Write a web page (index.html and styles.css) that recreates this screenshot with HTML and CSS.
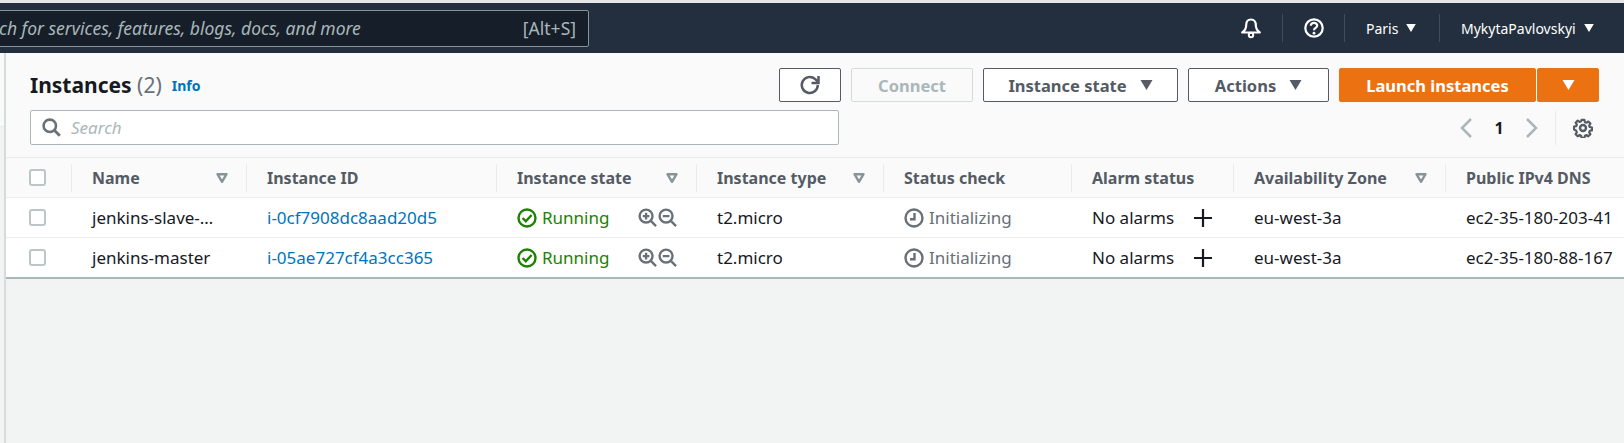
FILE: index.html
```html
<!DOCTYPE html>
<html lang="en">
<head>
    <meta charset="UTF-8">
    <title>Instances | EC2</title>
    <link rel="stylesheet" href="styles.css">
</head>
<body>
    <svg class="icon-defs" width="0" height="0">
        <defs>
            <symbol id="filter" viewBox="0 0 12 10">
                <path d="M1.500 1.200h9L6 8.800z" fill="none" stroke="currentColor" stroke-width="2.400" stroke-linejoin="round"/>
            </symbol>
            <symbol id="running" viewBox="0 0 20 20">
                <circle cx="10" cy="10" r="8.500" fill="none" stroke="currentColor" stroke-width="2.400"/>
                <path d="M5.600 10l3.200 3.200 5.800-6.200" fill="none" stroke="currentColor" stroke-width="2.400"/>
            </symbol>
            <symbol id="zoom-in" viewBox="0 0 20 20">
                <circle cx="8.500" cy="8.500" r="6.800" fill="none" stroke="currentColor" stroke-width="2.500"/>
                <path d="M13.500 13.500l5.500 5.500M5 8.500h7M8.500 5v7" fill="none" stroke="currentColor" stroke-width="2.500"/>
            </symbol>
            <symbol id="zoom-out" viewBox="0 0 20 20">
                <circle cx="8.500" cy="8.500" r="6.800" fill="none" stroke="currentColor" stroke-width="2.500"/>
                <path d="M13.500 13.500l5.500 5.500M5 8.500h7" fill="none" stroke="currentColor" stroke-width="2.500"/>
            </symbol>
            <symbol id="clock" viewBox="0 0 20 20">
                <circle cx="10" cy="10" r="8.500" fill="none" stroke="currentColor" stroke-width="2.400"/>
                <path d="M10.500 5v6.200H6" fill="none" stroke="currentColor" stroke-width="2.400"/>
            </symbol>
            <symbol id="plus" viewBox="0 0 18 18">
                <path d="M0 9h18M9 0v18" fill="none" stroke="currentColor" stroke-width="2.200"/>
            </symbol>
            <symbol id="caret" viewBox="0 0 12 10">
                <path d="M0 0h12L6 10z" fill="currentColor"/>
            </symbol>
        </defs>
    </svg>

    <div class="top-strip"></div>

    <header class="nav">
        <div class="nav-search">
            <span class="nav-search-text">ch for services, features, blogs, docs, and more</span>
            <span class="nav-search-key">[Alt+S]</span>
        </div>
        <div class="nav-right">
            <span class="nav-item nav-bell">
                <svg width="22" height="22" viewBox="0 0 22 22"><path d="M11 2.500c-3.200 0-4.800 2.500-4.800 5.500 0 3.500-1.200 5.500-4 7.500h17.600c-2.800-2-4-4-4-7.500 0-3-1.600-5.500-4.800-5.500z" fill="none" stroke="#fff" stroke-width="2.200" stroke-linejoin="round"/><circle cx="11" cy="18" r="2.200" fill="none" stroke="#fff" stroke-width="2"/></svg>
            </span>
            <span class="nav-item nav-help">
                <svg width="20" height="20" viewBox="0 0 20 20"><circle cx="10" cy="10" r="8.700" fill="none" stroke="#fff" stroke-width="2.200"/><path d="M6.800 7.800c0-1.900 1.400-3 3.200-3s3.200 1.100 3.200 2.700c0 2.500-3.200 2.300-3.200 4.700" fill="none" stroke="#fff" stroke-width="2.200"/><circle cx="10" cy="15.200" r="1.400" fill="#fff"/></svg>
            </span>
            <span class="nav-item nav-region">Paris <svg class="nav-caret"><use href="#caret"/></svg></span>
            <span class="nav-item nav-user">MykytaPavlovskyi <svg class="nav-caret"><use href="#caret"/></svg></span>
        </div>
    </header>

    <div class="page">
        <div class="rail">
            <div class="rail-top"></div>
        </div>
        <main class="content">
            <section class="panel-head">
                <div class="head-row">
                    <h1 class="title">Instances <span class="count">(2)</span></h1>
                    <a class="info">Info</a>
                    <div class="actions">
                        <button class="btn btn-refresh" type="button">
                            <svg width="24" height="24" viewBox="0 0 24 24"><path d="M19.800 12a8 8 0 1 1-2.600-5.900l2.600 2.400" fill="none" stroke="#545b64" stroke-width="2.500"/><path d="M20.500 3v7h-7" fill="none" stroke="#545b64" stroke-width="2.500"/></svg>
                        </button>
                        <button class="btn btn-connect" type="button" disabled>Connect</button>
                        <button class="btn btn-state" type="button">Instance state <svg class="btn-caret"><use href="#caret"/></svg></button>
                        <button class="btn btn-actions" type="button">Actions <svg class="btn-caret"><use href="#caret"/></svg></button>
                        <div class="launch">
                            <button class="btn btn-launch" type="button">Launch instances</button>
                            <button class="btn btn-launch-more" type="button"><svg class="btn-caret"><use href="#caret"/></svg></button>
                        </div>
                    </div>
                </div>
                <div class="tools-row">
                    <div class="search">
                        <svg width="19" height="19" viewBox="0 0 19 19"><circle cx="7.800" cy="7.800" r="6.200" fill="none" stroke="#687078" stroke-width="2.600"/><path d="M12.300 12.300l5.500 5.500" fill="none" stroke="#687078" stroke-width="2.800"/></svg>
                        <span class="search-text">Search</span>
                    </div>
                    <div class="pager">
                        <svg width="12" height="20" viewBox="0 0 12 20"><path d="M11 1L2 10l9 9" fill="none" stroke="#aab7b8" stroke-width="2.500"/></svg>
                        <span class="pager-num">1</span>
                        <svg width="12" height="20" viewBox="0 0 12 20"><path d="M1 1l9 9-9 9" fill="none" stroke="#aab7b8" stroke-width="2.500"/></svg>
                        <span class="pager-gear">
                            <svg width="20" height="20" viewBox="0 0 20 20"><path d="M8.400 1h3.200l.5 2.500 1.700.7 2.100-1.400 2.300 2.300-1.400 2.100.7 1.700 2.500.5v3.200l-2.500.5-.7 1.700 1.400 2.100-2.300 2.300-2.100-1.400-1.700.7-.5 2.500H8.400l-.5-2.500-1.700-.7-2.100 1.400-2.300-2.300 1.400-2.100-.7-1.700L0 11.600V8.400l2.500-.5.700-1.700-1.400-2.100 2.300-2.300 2.100 1.400 1.700-.7z" transform="translate(1 1) scale(.9)" fill="none" stroke="#545b64" stroke-width="2.400" stroke-linejoin="round"/><circle cx="10" cy="10" r="3" fill="none" stroke="#545b64" stroke-width="2.400"/></svg>
                        </span>
                    </div>
                </div>
            </section>

            <section class="table">
                <div class="row row-head">
                    <div class="cell cell-check"><span class="checkbox"></span></div>
                    <div class="cell"><div class="col-head">Name <svg class="filter"><use href="#filter"/></svg></div></div>
                    <div class="cell"><div class="col-head">Instance ID</div></div>
                    <div class="cell"><div class="col-head">Instance state <svg class="filter"><use href="#filter"/></svg></div></div>
                    <div class="cell"><div class="col-head">Instance type <svg class="filter"><use href="#filter"/></svg></div></div>
                    <div class="cell"><div class="col-head">Status check</div></div>
                    <div class="cell"><div class="col-head">Alarm status</div></div>
                    <div class="cell"><div class="col-head">Availability Zone <svg class="filter"><use href="#filter"/></svg></div></div>
                    <div class="cell"><div class="col-head">Public IPv4 DNS</div></div>
                </div>

                <div class="row row-body">
                    <div class="cell cell-check"><span class="checkbox"></span></div>
                    <div class="cell cell-text">jenkins-slave-…</div>
                    <div class="cell cell-text"><a class="link">i-0cf7908dc8aad20d5</a></div>
                    <div class="cell cell-text cell-state">
                        <span class="running"><svg class="status-icon"><use href="#running"/></svg>Running</span>
                        <span class="zooms"><svg class="zoom-icon"><use href="#zoom-in"/></svg><svg class="zoom-icon"><use href="#zoom-out"/></svg></span>
                    </div>
                    <div class="cell cell-text">t2.micro</div>
                    <div class="cell cell-text muted"><svg class="status-icon"><use href="#clock"/></svg>Initializing</div>
                    <div class="cell cell-text cell-alarm">No alarms <svg class="plus"><use href="#plus"/></svg></div>
                    <div class="cell cell-text">eu-west-3a</div>
                    <div class="cell cell-text cell-dns">ec2-35-180-203-41</div>
                </div>

                <div class="row row-body row-last">
                    <div class="cell cell-check"><span class="checkbox"></span></div>
                    <div class="cell cell-text">jenkins-master</div>
                    <div class="cell cell-text"><a class="link">i-05ae727cf4a3cc365</a></div>
                    <div class="cell cell-text cell-state">
                        <span class="running"><svg class="status-icon"><use href="#running"/></svg>Running</span>
                        <span class="zooms"><svg class="zoom-icon"><use href="#zoom-in"/></svg><svg class="zoom-icon"><use href="#zoom-out"/></svg></span>
                    </div>
                    <div class="cell cell-text">t2.micro</div>
                    <div class="cell cell-text muted"><svg class="status-icon"><use href="#clock"/></svg>Initializing</div>
                    <div class="cell cell-text cell-alarm">No alarms <svg class="plus"><use href="#plus"/></svg></div>
                    <div class="cell cell-text">eu-west-3a</div>
                    <div class="cell cell-text cell-dns">ec2-35-180-88-167</div>
                </div>
            </section>
        </main>
    </div>
</body>
</html>
```
FILE: styles.css
```css
html, body {
    margin: 0;
    height: 100%;
    overflow: hidden;
}
body {
    display: flex;
    flex-direction: column;
    font-family: "Noto Sans", Arial, sans-serif;
    font-size: 17px;
    color: #16191f;
    background-color: #f2f3f3;
}
.icon-defs {
    position: absolute;
}
.top-strip {
    height: 3px;
    background-color: #e4e6e8;
}

/* top navigation */
.nav {
    display: flex;
    align-items: center;
    height: 50px;
    background-color: #232f3e;
    color: #fff;
}
.nav-search {
    display: flex;
    align-items: center;
    justify-content: space-between;
    box-sizing: border-box;
    width: 591px;
    height: 37px;
    margin-left: -2px;
    padding: 0 12px 0 0;
    background-color: #161e2a;
    border: 1px solid #879596;
    border-radius: 2px;
    color: #aab7b8;
    font-size: 17.500px;
}
.nav-search-text {
    font-style: italic;
}
.nav-right {
    display: flex;
    align-items: center;
    margin-left: auto;
    font-size: 14px;
}
.nav-item {
    display: flex;
    align-items: center;
    box-sizing: border-box;
    height: 28px;
}
.nav-item + .nav-item {
    border-left: 1px solid #414d5c;
}
.nav-bell {
    width: 50px;
    padding-left: 8px;
}
.nav-help {
    width: 62px;
    padding-left: 21px;
}
.nav-region {
    width: 95px;
    padding-left: 21px;
}
.nav-user {
    width: 185px;
    padding-left: 21px;
}
.nav-caret {
    width: 10px;
    height: 8px;
    margin-left: 8px;
    color: #fff;
}

/* page body */
.page {
    flex: 1;
    display: flex;
}
.rail {
    width: 4px;
}
.rail-top {
    box-sizing: border-box;
    height: 74px;
    background-color: #fafafa;
    border-bottom: 1px solid #eaeded;
}
.content {
    flex: 1;
    min-width: 0;
    border-left: 2px solid #d5dbdb;
}
.panel-head {
    box-sizing: border-box;
    height: 105px;
    padding: 15px 25px 0 24px;
    background-color: #fafafa;
    border-bottom: 1px solid #eaeded;
}
.head-row {
    display: flex;
    align-items: center;
    height: 34px;
}
.title {
    margin: 0;
    font-size: 21px;
    font-weight: 700;
}
.count {
    font-weight: 400;
    color: #687078;
}
.info {
    margin-left: 10px;
    font-size: 14px;
    font-weight: 700;
    color: #0073bb;
}
.actions {
    display: flex;
    gap: 10px;
    margin-left: auto;
}
.btn {
    display: flex;
    align-items: center;
    justify-content: center;
    box-sizing: border-box;
    height: 34px;
    padding: 0;
    font-family: inherit;
    font-size: 16.500px;
    font-weight: 700;
    color: #545b64;
    background-color: #fff;
    border: 1px solid #545b64;
    border-radius: 2px;
}
.btn-refresh {
    width: 62px;
}
.btn-connect {
    width: 122px;
    color: #aab7b8;
    background-color: #fafafa;
    border-color: #d5dbdb;
}
.btn-state {
    width: 195px;
}
.btn-actions {
    width: 141px;
}
.btn-caret {
    width: 13px;
    height: 10px;
    margin-left: 13px;
}
.launch {
    display: flex;
    gap: 1px;
}
.btn-launch,
.btn-launch-more {
    color: #fff;
    background-color: #ec7211;
    border-color: #ec7211;
}
.btn-launch {
    width: 197px;
}
.btn-launch-more {
    width: 62px;
}
.btn-launch-more .btn-caret {
    margin-left: 0;
}
.tools-row {
    display: flex;
    align-items: center;
    margin-top: 8px;
}
.search {
    display: flex;
    align-items: center;
    box-sizing: border-box;
    width: 809px;
    height: 35px;
    padding-left: 11px;
    background-color: #fff;
    border: 1px solid #aab7b8;
    border-radius: 2px;
}
.search-text {
    margin-left: 10px;
    font-size: 17px;
    font-style: italic;
    color: #aab7b8;
}
.pager {
    display: flex;
    align-items: center;
    margin-left: auto;
}
.pager-num {
    width: 54px;
    font-size: 16px;
    font-weight: 700;
    text-align: center;
}
.pager-gear {
    display: flex;
    align-items: center;
    box-sizing: border-box;
    width: 44px;
    height: 34px;
    margin-left: 17px;
    padding-left: 17px;
    border-left: 1px solid #eaeded;
}

/* instances table */
.table {
    border-bottom: 2px solid #aab7b8;
}
.row {
    display: grid;
    grid-template-columns: 65px 175px 250px 200px 187px 188px 162px 212px 179px;
}
.row-head {
    height: 39px;
    background-color: #fafafa;
    border-bottom: 1px solid #eaeded;
    font-size: 16px;
    font-weight: 700;
    color: #545b64;
}
.row-body {
    height: 39px;
    background-color: #fff;
    border-bottom: 1px solid #eaeded;
}
.row-last {
    border-bottom: none;
}
.cell {
    display: flex;
    align-items: center;
    min-width: 0;
}
.cell-check {
    padding-left: 23px;
}
.cell-text {
    padding-left: 21px;
    white-space: nowrap;
}
.checkbox {
    box-sizing: border-box;
    width: 17px;
    height: 17px;
    background-color: #fff;
    border: 2px solid #bcc6c6;
    border-radius: 3px;
}
.col-head {
    display: flex;
    align-items: center;
    justify-content: space-between;
    box-sizing: border-box;
    width: 100%;
    height: 28px;
    padding: 0 18px 0 20px;
    border-left: 1px solid #eaeded;
}
.filter {
    width: 12px;
    height: 10px;
    color: #879596;
}
.link {
    color: #0073bb;
}
.cell-state {
    justify-content: space-between;
    padding-right: 19px;
}
.running {
    display: flex;
    align-items: center;
    color: #1d8102;
}
.status-icon {
    width: 20px;
    height: 20px;
    margin-right: 5px;
}
.zooms {
    display: flex;
    gap: 1px;
    color: #687078;
}
.zoom-icon {
    width: 19px;
    height: 19px;
}
.muted {
    color: #687078;
}
.cell-alarm {
    justify-content: space-between;
    padding-right: 21px;
}
.plus {
    width: 18px;
    height: 18px;
    color: #16191f;
}
```
